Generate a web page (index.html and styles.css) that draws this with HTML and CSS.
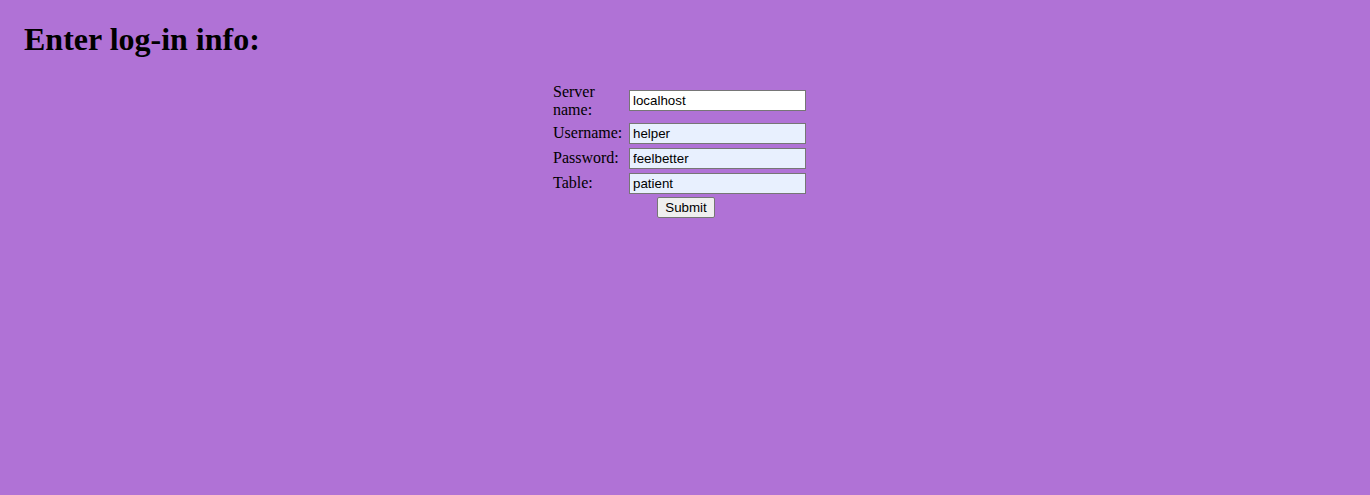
FILE: index.html
```html
<!DOCTYPE html>
<html>
<head>
<meta charset="utf-8">
<title>Log-in</title>
<link rel="stylesheet" href="styles.css">
</head>
<body>
<div class="page">
  <h1 class="title">Enter log-in info:</h1>
  <form class="login">
    <table class="fields">
      <tr>
        <td class="label">Server name:</td>
        <td><input class="field" type="text" value="localhost"></td>
      </tr>
      <tr>
        <td class="label">Username:</td>
        <td><input class="field filled" type="text" value="helper"></td>
      </tr>
      <tr>
        <td class="label">Password:</td>
        <td><input class="field filled" type="text" value="feelbetter"></td>
      </tr>
      <tr>
        <td class="label">Table:</td>
        <td><input class="field filled" type="text" value="patient"></td>
      </tr>
    </table>
    <div class="actions"><button class="submit" type="button">Submit</button></div>
  </form>
</div>
</body>
</html>
```
FILE: styles.css
```css
html, body {
  background: #b072d6;
}
body {
  margin: 0 8px 8px;
  font-family: "Liberation Serif", "Times New Roman", serif;
  font-size: 16px;
  color: #000;
}
.page {
  padding: 0 16px;
}
.title {
  font-size: 32px;
  font-weight: bold;
  margin: 21.44px 0;
  line-height: 37px;
}
.login {
  margin: 0;
}
.fields {
  width: 270px;
  margin: 0 auto;
  border-spacing: 2px;
}
.fields td {
  padding: 1px;
  vertical-align: middle;
}
.label {
  width: 72px;
  line-height: 18px;
}
.field {
  display: block;
  box-sizing: border-box;
  width: 177px;
  height: 21px;
  margin: 0;
  padding: 1px 3px;
  border: 1px solid #767676;
  background: #fff;
  font-family: "Liberation Sans", Arial, sans-serif;
  font-size: 13.333px;
  color: #000;
}
.field.filled {
  background: #e8f0fe;
}
.actions {
  text-align: center;
  padding-left: 2px;
}
.submit {
  box-sizing: border-box;
  height: 21px;
  width: 58px;
  margin: 0;
  padding: 1px 6px;
  border: 1px solid #767676;
  border-radius: 2px;
  background: #efefef;
  font-family: "Liberation Sans", Arial, sans-serif;
  font-size: 13.333px;
  color: #000;
}
```
